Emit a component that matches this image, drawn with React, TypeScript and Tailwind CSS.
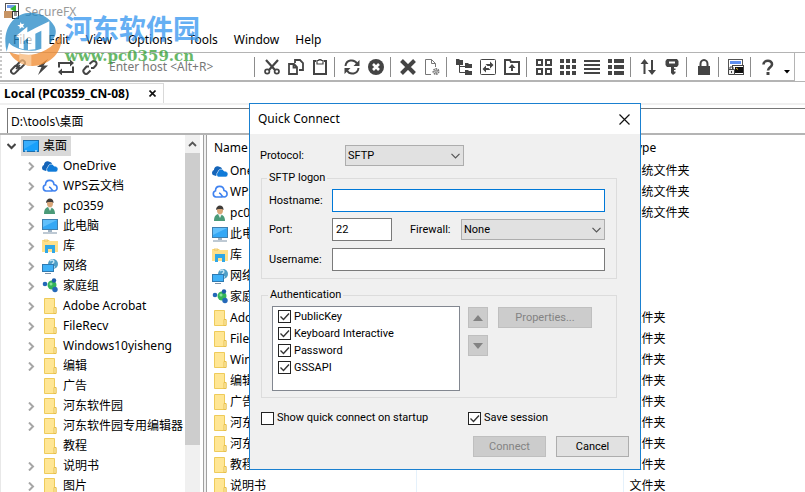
import type { ReactNode } from "react";

type Kind = "desktop" | "onedrive" | "wps" | "user" | "pc" | "library" | "network" | "homegroup" | "folder";
type Item = { name: string; kind: Kind; expandable: boolean; type: string };

const items: Item[] = [
  { name: "OneDrive", kind: "onedrive", expandable: true, type: "系统文件夹" },
  { name: "WPS云文档", kind: "wps", expandable: true, type: "系统文件夹" },
  { name: "pc0359", kind: "user", expandable: true, type: "系统文件夹" },
  { name: "此电脑", kind: "pc", expandable: true, type: "" },
  { name: "库", kind: "library", expandable: true, type: "" },
  { name: "网络", kind: "network", expandable: true, type: "" },
  { name: "家庭组", kind: "homegroup", expandable: true, type: "" },
  { name: "Adobe Acrobat", kind: "folder", expandable: true, type: "文件夹" },
  { name: "FileRecv", kind: "folder", expandable: true, type: "文件夹" },
  { name: "Windows10yisheng", kind: "folder", expandable: true, type: "文件夹" },
  { name: "编辑", kind: "folder", expandable: true, type: "文件夹" },
  { name: "广告", kind: "folder", expandable: false, type: "文件夹" },
  { name: "河东软件园", kind: "folder", expandable: true, type: "文件夹" },
  { name: "河东软件园专用编辑器", kind: "folder", expandable: true, type: "文件夹" },
  { name: "教程", kind: "folder", expandable: false, type: "文件夹" },
  { name: "说明书", kind: "folder", expandable: true, type: "文件夹" },
  { name: "图片", kind: "folder", expandable: true, type: "文件夹" },
];

// The list pane is short of room for the last folder.
const listed = items.slice(0, 16);

const menus = ["File", "Edit", "View", "Options", "Tools", "Window", "Help"];

function Monitor() {
  return (
    <>
      <rect x="0.5" y="1.5" width="15" height="10" fill="#35a8f5" stroke="#3f7fae" />
      <path d="M1 2h14L1 9z" fill="#7fd0ff" opacity=".6" />
      <path d="M6 12h4v2H6z" fill="#9fb3c4" />
      <path d="M1 15h14" stroke="#7d93a8" />
    </>
  );
}

function FileIcon({ kind }: { kind: Kind }) {
  let art: ReactNode;
  switch (kind) {
    case "desktop":
      art = (
        <>
          <rect x="0.5" y="2.5" width="15" height="11" fill="#18a0fb" stroke="#1b6fae" />
          <path d="M1 3h14L1 11z" fill="#4db8ff" opacity=".6" />
          <path d="M2 13h2M12 13h2" stroke="#fff" />
        </>
      );
      break;
    case "onedrive":
      art = (
        <>
          <path d="M1 12a3 3 0 0 1 1-5c0-3 3-5 6-3 1 0 2 1 2 2L4 13z" fill="#1464b8" />
          <path d="M6 14a3 3 0 0 1 0-5c0-3 5-4 6-1 3 0 4 2 4 3s-1 3-2 3z" fill="#0f7ad8" stroke="#fff" strokeWidth=".6" />
        </>
      );
      break;
    case "wps":
      art = (
        <path
          d="M10.500 13H4a3.200 3.200 0 0 1-.5-6.200C3.500 1 11.500 1 12 6.500c4 .5 4.200 6.500 0 6.500-3 0-2-3.500-5-4"
          fill="none"
          stroke="#3f82f0"
          strokeWidth="1.600"
        />
      );
      break;
    case "user":
      art = (
        <>
          <path d="M2 16c0-5 2-7 5-7s6 2 6 7z" fill="#4a9a78" />
          <path d="M6 9l2 4 2-4z" fill="#e9f2ee" />
          <ellipse cx="8" cy="5.500" rx="3" ry="3.700" fill="#d9a679" />
          <path d="M4 5c0-6 8-6 7.500 0L10 4H6z" fill="#3f3b38" />
        </>
      );
      break;
    case "pc":
      art = <Monitor />;
      break;
    case "library":
      art = (
        <>
          <path d="M0 2h7l1 1h8v11H0z" fill="#ffe08a" />
          <path d="M2 2h4v1H2z" fill="#fff" stroke="#e8b93c" strokeWidth=".7" />
          <path d="M3 15V7h10v8h-3v-4H6v4z" fill="#2fa7e6" />
        </>
      );
      break;
    case "network":
      art = (
        <>
          <circle cx="11" cy="6" r="5" fill="#4f9fc7" />
          <path d="M8 3c3-2 5 0 3 2s-1 4 2 4" stroke="#c3e4f2" strokeWidth="1.500" fill="none" />
          <rect x="0.500" y="6.500" width="11" height="7" fill="#3fb1f7" stroke="#2f79b0" />
          <path d="M3 15.500h6" stroke="#7d93a8" />
        </>
      );
      break;
    case "homegroup":
      art = (
        <>
          <circle cx="10" cy="7" r="4.500" fill="#35b558" />
          <circle cx="3" cy="6" r="2.300" fill="#2468b8" />
          <circle cx="12" cy="2.500" r="2.200" fill="#1e5ba8" />
          <circle cx="13" cy="11.500" r="2.700" fill="#2468b8" />
          <circle cx="9" cy="6" r="1.500" fill="#8be09b" />
        </>
      );
      break;
    default:
      art = (
        <>
          <path d="M2.500 .5h10v9h1.500v6H2.500z" fill="#ffe694" stroke="#eecb5a" />
          <path d="M12 15.500V9.500h2v6z" fill="#fff0b8" stroke="#e5b93f" strokeWidth=".8" />
        </>
      );
  }
  return (
    <svg className="size-4 shrink-0" viewBox="0 0 16 16" aria-hidden="true">
      {art}
    </svg>
  );
}

const glyphs: Record<string, ReactNode> = {
  Connect: (
    <g fill="none" stroke="currentColor" strokeWidth="2">
      <rect x="6.500" y="2.800" width="9" height="5" rx="2.500" transform="rotate(-45 11 5.300)" />
      <rect x=".5" y="8.200" width="9" height="5" rx="2.500" transform="rotate(-45 5 10.700)" />
      <path d="M6 10l4-4" strokeWidth="1.600" />
    </g>
  ),
  "Quick connect": <path d="M14 0L3 8h4.500L4 16l10-9.500H9.500z" fill="currentColor" />,
  Reconnect: (
    <g fill="none" stroke="currentColor" strokeWidth="2">
      <path d="M1 8.500V4h12M15 7.500V13H3" />
      <path d="M12 .500L16 4l-4 3.500zM4 9.500L0 13l4 3.500z" fill="currentColor" stroke="none" />
    </g>
  ),
  Disconnect: (
    <g fill="none" stroke="currentColor" strokeWidth="2">
      <path d="M7.500 5L10 2.700a2.600 2.600 0 0 1 3.800 3.800L11.500 9H9" />
      <path d="M8.500 11.500L6 14A2.600 2.600 0 0 1 2.200 10.200L4.500 7.500H7" />
    </g>
  ),
  Cut: (
    <g fill="none" stroke="currentColor">
      <path d="M2 1l9 10M14 1L5 11" strokeWidth="2.200" />
      <circle cx="3.200" cy="12.500" r="2.200" strokeWidth="1.700" />
      <circle cx="12.800" cy="12.500" r="2.200" strokeWidth="1.700" />
    </g>
  ),
  Copy: (
    <g fill="none" stroke="currentColor" strokeWidth="1.800">
      <path d="M7 4V1h5l3 3v7h-4" />
      <path d="M1 5h5l3 3v7H1zM5.500 5v3.500H9" />
    </g>
  ),
  Paste: (
    <g fill="none" stroke="currentColor">
      <path d="M4 2H2v13h12V2h-2" strokeWidth="2" />
      <path d="M5 1.500h2V.500h2v1h2V5H5z" strokeWidth="1.200" />
    </g>
  ),
  Refresh: (
    <g fill="none" stroke="currentColor" strokeWidth="2">
      <path d="M1.500 7A6.200 6.200 0 0 1 13 4.500M14.500 9A6.200 6.200 0 0 1 3 11.500" />
      <path d="M15.500 1v6H9.500zM.5 15V9h6z" fill="currentColor" stroke="none" />
    </g>
  ),
  Stop: (
    <>
      <circle cx="8" cy="8" r="8" fill="currentColor" />
      <path d="M5 5l6 6M11 5l-6 6" stroke="#fff" strokeWidth="2.600" />
    </>
  ),
  Delete: <path d="M1.500 1.500l13 13M14.500 1.500l-13 13" stroke="currentColor" strokeWidth="4" />,
  "Properties of file": (
    <g fill="none" stroke="#777">
      <path d="M7 15.500H1.500V.500h6l4 4V8M7.500.500v4h4" />
      <circle cx="12" cy="12.500" r="2.500" strokeWidth="2" strokeDasharray="1.500 .7" />
      <circle cx="12" cy="12.500" r="1" />
    </g>
  ),
  Tree: (
    <>
      <path d="M0 0h3l1 1h3v5H0zM9 4h3l1 1h3v4H9zM9 11h3l1 1h3v4H9z" fill="currentColor" />
      <path d="M3.500 5v8.500H9M3.500 7.500H9" fill="none" stroke="currentColor" />
    </>
  ),
  Synchronize: (
    <>
      <rect x=".5" y=".5" width="15" height="15" rx="1" fill="none" stroke="currentColor" />
      <path d="M5.500 5H10V2.500l3.500 3.500L10 9.500V7H7.500zM10.500 11H6v2.500L2.500 10 6 6.500V9h2.500z" fill="currentColor" />
    </>
  ),
  "Up one level": (
    <>
      <path d="M1 15V1h5l1 2h8v12z" fill="none" stroke="currentColor" strokeWidth="2" />
      <path d="M8 5l3.500 4H9v3H7V9H4.500z" fill="currentColor" />
    </>
  ),
  "Large icons": (
    <path d="M1 1h5v5H1zM10 1h5v5h-5zM1 10h5v5H1zM10 10h5v5h-5z" fill="none" stroke="currentColor" strokeWidth="2" />
  ),
  "Small icons": (
    <path
      d="M0 0h4v4H0zM6 0h4v4H6zM12 0h4v4h-4zM0 6h4v4H0zM6 6h4v4H6zM12 6h4v4h-4zM0 12h4v4H0zM6 12h4v4H6zM12 12h4v4h-4z"
      fill="currentColor"
    />
  ),
  List: <path d="M0 2h16M0 6h16M0 10h16M0 14h16" stroke="currentColor" strokeWidth="2" />,
  Details: (
    <path d="M0 0h4v4H0zM6 0h10v4H6zM0 6h4v4H0zM6 6h10v4H6zM0 12h4v4H0zM6 12h10v4H6z" fill="currentColor" />
  ),
  Transfer: (
    <g stroke="currentColor" strokeWidth="2" fill="currentColor">
      <path d="M4.500 4v11M12 1v10" />
      <path d="M4.500 0L8.500 5h-8zM12 16l4-5H8z" stroke="none" />
    </g>
  ),
  Key: (
    <path
      d="M3 0h10l1.500 2v4L13 8h-3v1.500h1.500V11H10v1.500h1.500V14L9 16l-2-2V8H3L1.500 6V2zM5 2.500v2h6v-2z"
      fillRule="evenodd"
      fill="currentColor"
    />
  ),
  Lock: (
    <>
      <path d="M2 7h12v9H2z" fill="currentColor" />
      <path d="M4.500 8V5a3.500 4 0 0 1 7 0v3" fill="none" stroke="currentColor" strokeWidth="2" />
    </>
  ),
  "Launch session": (
    <>
      <rect x=".5" y=".5" width="14" height="10" fill="#fff" stroke="#555" />
      <path d="M2 2h11v3H2z" fill="#6090f0" />
      <rect x="4.500" y="6.500" width="11" height="9" fill="#fff" stroke="#444" />
      <path d="M7 8h8v6H7z" fill="#111" />
      <path d="M8 9l2 1.500" stroke="#e8c030" />
      <path d="M.5 10.500h6v5h-6z" fill="#eee" stroke="#444" />
      <path d="M2 10V8h3v2M3.500 12v2" fill="none" stroke="#444" />
    </>
  ),
  Help: (
    <>
      <path d="M3.500 5.500C3.500.500 12.500.500 12 5.500c0 2.500-4 3-4 6" fill="none" stroke="currentColor" strokeWidth="2.600" />
      <path d="M6.500 13h3v3h-3z" fill="currentColor" />
    </>
  ),
};

function Tools({ names }: { names: string[] }) {
  return (
    <div className="flex shrink-0">
      {names.map((n) => (
        <button key={n} type="button" aria-label={n} className="flex h-6 w-6 items-center justify-center">
          <svg className="size-4" viewBox="0 0 16 16">
            {glyphs[n]}
          </svg>
        </button>
      ))}
    </div>
  );
}

function Rule() {
  return (
    <div className="w-2 shrink-0 pl-0.5">
      <div className="h-5 w-px bg-[#8c8c8c]" />
    </div>
  );
}

function Toolbar() {
  const groups = [
    ["Cut", "Copy", "Paste"],
    ["Refresh", "Stop"],
    ["Delete", "Properties of file"],
    ["Tree", "Synchronize", "Up one level"],
    ["Large icons", "Small icons", "List", "Details"],
    ["Transfer", "Key"],
    ["Lock"],
    ["Launch session"],
  ];
  return (
    <div className="flex h-[29px] shrink-0 border-b border-[#b4b4b4]">
      <div className="flex items-center border-r border-b border-[#b4b4b4] pt-px pr-1 text-[#444]">
        <div className="h-[22px] w-1.5 shrink-0">
          <div className="h-full border-l-2 border-dotted border-[#c8c8c8]" />
        </div>
        <Tools names={["Connect", "Quick connect", "Reconnect", "Disconnect"]} />
        <input
          aria-label="Enter host"
          placeholder="Enter host <Alt+R>"
          className="w-[150px] min-w-0 pl-[7px] text-xs text-[#444] outline-none placeholder:text-[#777]"
        />
        <Rule />
        {groups.map((g) => (
          <div key={g[0]} className="flex items-center">
            <Tools names={g} />
            <Rule />
          </div>
        ))}
        <Tools names={["Help"]} />
        <svg className="mt-2.5 ml-1 h-1 w-1.5" viewBox="0 0 6 4">
          <path d="M0 0h6L3 3.500z" fill="#000" />
        </svg>
      </div>
    </div>
  );
}

function Watermark() {
  return (
    <div className="pointer-events-none absolute top-2.5 left-1 flex gap-[3px] opacity-75">
      <svg className="size-[58px]" viewBox="12 30 174 174">
        <path
          d="M20 155C4 92 38 38 92 38c33 0 58 17 71 40 6 12 5 22 2 30-12 26-40 44-70 44-30 0-56-10-68-24z"
          fill="#2287c6"
        />
        <path d="M61 66l4 6 8-1-4 6 4 7-8-2-6 5v-7l-7-4 8-2z" fill="#fff" />
        <path d="M48 108l34-28v17l24-13 42-20v86l-24-4V92l-18 9v47l-22 2v-36l-13 10v24l-14-4v-31z" fill="#fff" />
        <path d="M183 103c10 56-40 97-88 95-31-2-57-19-67-42 60 23 124 4 155-53z" fill="#f0882a" />
        <path d="M58 160c12 4 24 5 36 4v34c-14-1-26-5-36-11z" fill="#f7b676" />
      </svg>
      <div className="flex flex-col pt-1 leading-none">
        <span className="font-['Noto_Sans_CJK_SC',sans-serif] text-[27px] leading-7 font-bold text-[#3295f0]">河东软件园</span>
        <span className="pt-0.5 font-['DejaVu_Serif',serif] text-[15px] leading-6 font-bold text-[#35a035]">www.pc0359.cn</span>
      </div>
    </div>
  );
}

function Tree() {
  return (
    <aside className="flex w-[203px] shrink-0 overflow-hidden border-l border-[#e8e8e8]">
      <div className="min-w-0 flex-1 overflow-hidden pt-px">
        <div className="flex h-5 items-center pl-1.5">
          <svg className="h-2 w-[9px] shrink-0" viewBox="0 0 9 8">
            <path d="M.5 2l4 4 4-4" fill="none" stroke="#444" strokeWidth="2" />
          </svg>
          <button type="button" className="ml-[5px] flex h-5 items-center gap-1 bg-[#d9d9d9] pr-1 pl-0.5">
            <FileIcon kind="desktop" />
            桌面
          </button>
        </div>
        <ul>
          {items.map((it) => (
            <li key={it.name} className="flex h-5 items-center pl-[26px]">
              <svg className="h-[9px] w-2 shrink-0" viewBox="0 0 8 9">
                {it.expandable && <path d="M2 .5l4 4-4 4" fill="none" stroke="#a6a6a6" strokeWidth="2" />}
              </svg>
              <button type="button" className="ml-[7px] flex items-center gap-[5px] whitespace-nowrap">
                <FileIcon kind={it.kind} />
                {it.name}
              </button>
            </li>
          ))}
        </ul>
      </div>
      <div className="mr-[3px] flex w-[15px] shrink-0 flex-col bg-[#f0f0f0]">
        <div className="flex h-[18px] items-center justify-center">
          <svg className="h-2 w-[9px]" viewBox="0 0 9 8">
            <path d="M1 6l3.500-3.500L8 6" fill="none" stroke="#555" strokeWidth="1.800" />
          </svg>
        </div>
        <div className="h-[292px] bg-[#cdcdcd]" />
      </div>
    </aside>
  );
}

function FileList() {
  return (
    <div className="min-w-0 flex-1 overflow-hidden">
      <table className="w-full table-fixed border-collapse text-left">
        <colgroup>
          <col className="w-[209px]" />
          <col className="w-[207px]" />
          <col />
        </colgroup>
        <thead>
          <tr className="h-[25px]">
            <th className="border-r border-[#e5f1fb] pl-[7px] font-normal">Name</th>
            <th className="border-r border-[#e5f1fb] font-normal" aria-label="Size" />
            <th className="pl-1.5 font-normal">Type</th>
          </tr>
        </thead>
        <tbody>
          {listed.map((it) => (
            <tr key={it.name} className="h-[21px]">
              <td className="border-r border-[#e5f1fb] pl-[5px]">
                <span className="flex items-center gap-0.5 whitespace-nowrap">
                  <FileIcon kind={it.kind} />
                  {it.name}
                </span>
              </td>
              <td className="border-r border-[#e5f1fb]" />
              <td className="pl-1.5">{it.type}</td>
            </tr>
          ))}
        </tbody>
      </table>
    </div>
  );
}

function Check({ label, checked }: { label: string; checked?: boolean }) {
  return (
    <label className="flex items-center gap-[3px] whitespace-nowrap">
      <span className="relative size-[13px]">
        <input
          type="checkbox"
          defaultChecked={checked}
          className="peer block size-[13px] appearance-none border border-[#222] bg-white"
        />
        <svg
          className="pointer-events-none absolute inset-0 hidden size-[13px] peer-checked:block"
          viewBox="0 0 13 13"
        >
          <path d="M2.500 6.500l3 3 5.500-6" fill="none" stroke="#333" strokeWidth="1.400" />
        </svg>
      </span>
      {label}
    </label>
  );
}

function Dropdown({ id, value, width }: { id: string; value: string; width: string }) {
  return (
    <div className={`relative h-[21px] ${width}`}>
      <select
        id={id}
        defaultValue={value}
        className="block h-full w-full appearance-none border border-[#adadad] bg-[#e1e1e1] pt-px pl-0.5 leading-4 outline-none"
      >
        <option>{value}</option>
      </select>
      <svg className="pointer-events-none absolute top-2 right-1 h-1.5 w-[9px]" viewBox="0 0 9 6">
        <path d="M.5.800l4 4 4-4" fill="none" stroke="#555" strokeWidth="1.200" />
      </svg>
    </div>
  );
}

const disabledButton =
  "flex h-[21px] items-center justify-center border border-[#bfbfbf] bg-[#cccccc] text-[#838383]";

function QuickConnect() {
  return (
    <section
      role="dialog"
      aria-labelledby="dialog-title"
      className="absolute top-[103px] left-[249px] flex w-[392px] flex-col border border-[#1a80d0] bg-[#f0f0f0] pb-3 font-['Roboto','Noto_Sans_CJK_SC',sans-serif] text-[11px] leading-4"
    >
      <header className="flex h-[30px] items-center justify-between bg-white pr-2.5 pl-2">
        <h1 id="dialog-title" className="font-['Noto_Sans',sans-serif] text-xs">
          Quick Connect
        </h1>
        <button type="button" aria-label="Close">
          <svg className="size-[11px]" viewBox="0 0 11 11">
            <path d="M.5.500l10 10M10.500.500l-10 10" stroke="#111" strokeWidth="1.200" />
          </svg>
        </button>
      </header>
      <div className="flex items-center pt-[11px] pl-2.5">
        <label htmlFor="protocol" className="w-[85px]">
          Protocol:
        </label>
        <Dropdown id="protocol" value="SFTP" width="w-[119px]" />
      </div>
      <fieldset className="mt-1 mr-[23px] ml-[11px] flex flex-col border border-[#dcdcdc] pr-[11px] pb-[7px] pl-[7px]">
        <legend className="-ml-0.5 px-0.5">SFTP logon</legend>
        <div className="mt-[3px] flex items-center">
          <label htmlFor="host" className="w-[63px]">
            Hostname:
          </label>
          <input id="host" className="h-[23px] min-w-0 flex-1 border border-[#0078d7] bg-white px-1 outline-none" />
        </div>
        <div className="mt-1.5 flex items-center">
          <label htmlFor="port" className="w-[63px]">
            Port:
          </label>
          <input
            id="port"
            defaultValue="22"
            className="h-[23px] w-[60px] border border-[#7a7a7a] bg-white px-[3px] outline-none"
          />
          <label htmlFor="firewall" className="ml-[18px] w-[51px]">
            Firewall:
          </label>
          <Dropdown id="firewall" value="None" width="flex-1" />
        </div>
        <div className="mt-[7px] flex items-center">
          <label htmlFor="user" className="w-[63px]">
            Username:
          </label>
          <input id="user" className="h-[23px] min-w-0 flex-1 border border-[#7a7a7a] bg-white px-1 outline-none" />
        </div>
      </fieldset>
      <fieldset className="mt-2 mr-[23px] ml-[11px] flex border border-[#dcdcdc] px-2.5 pb-1.5">
        <legend className="-ml-1 px-0.5">Authentication</legend>
        <div className="mt-[3px] flex gap-2">
          <div className="flex h-[85px] w-[188px] flex-col border border-[#828790] bg-white pt-px pl-[5px]">
            {["PublicKey", "Keyboard Interactive", "Password", "GSSAPI"].map((m) => (
              <div key={m} className="flex h-[17px] items-center">
                <Check label={m} checked />
              </div>
            ))}
          </div>
          <div className="mt-px flex flex-col gap-[7px]">
            <button type="button" disabled aria-label="Move up" className={`${disabledButton} w-5`}>
              <svg className="h-1.5 w-2.5" viewBox="0 0 10 6">
                <path d="M0 6l5-6 5 6z" fill="#838383" />
              </svg>
            </button>
            <button type="button" disabled aria-label="Move down" className={`${disabledButton} w-5`}>
              <svg className="h-1.5 w-2.5" viewBox="0 0 10 6">
                <path d="M0 0l5 6 5-6z" fill="#838383" />
              </svg>
            </button>
          </div>
          <button type="button" disabled className={`${disabledButton} mt-px ml-0.5 w-[94px]`}>
            Properties...
          </button>
        </div>
      </fieldset>
      <div className="mt-3 flex px-[11px]">
        <div className="w-[207px]">
          <Check label="Show quick connect on startup" />
        </div>
        <Check label="Save session" checked />
      </div>
      <div className="mt-2.5 flex justify-end gap-2.5 pr-[11px]">
        <button type="button" disabled className={`${disabledButton} w-[73px]`}>
          Connect
        </button>
        <button type="button" className="h-[21px] w-[73px] border border-[#adadad] bg-[#e1e1e1]">
          Cancel
        </button>
      </div>
    </section>
  );
}

export default function App() {
  return (
    <div className="relative flex h-screen flex-col overflow-hidden bg-white font-['Noto_Sans','Noto_Sans_CJK_SC',sans-serif] text-xs leading-4 text-black">
      <header className="flex h-7 shrink-0 items-center gap-[5px] pl-1 text-[#999]">
        <svg className="mb-1.5 size-4" viewBox="0 0 16 16">
          <rect x="1.500" y=".5" width="13" height="9" fill="#fff" stroke="#555" />
          <path d="M3 2h8v3H3z" fill="#6f9be8" />
          <path d="M6 6l6-4v7z" fill="#2fb52f" />
          <path d="M0 8h8v7H0z" fill="#c79464" />
          <rect x="8.500" y="8.500" width="6" height="7" fill="#fff" stroke="#333" />
          <path d="M10 10h3M10 12h3" stroke="#333" />
        </svg>
        <span className="mb-1">SecureFX</span>
      </header>
      <nav className="flex h-[25px] shrink-0 items-center border-b border-[#b4b4b4]">
        <div className="h-[21px] w-[13px] shrink-0 border-l-2 border-dotted border-[#c8c8c8]" />
        <div className="flex gap-4">
          {menus.map((m) => (
            <button key={m} type="button">
              {m}
            </button>
          ))}
        </div>
      </nav>
      <Toolbar />
      <div className="flex h-[23px] shrink-0 border-b-2 border-[#f0f0f0] pt-px">
        <div className="flex items-center gap-5 border-t border-r border-[#d9d9d9] pr-[7px] pl-1">
          <span className="font-bold">Local (PC0359_CN-08)</span>
          <button type="button" aria-label="Close tab">
            <svg className="size-[7px]" viewBox="0 0 7 7">
              <path d="M.5.500l6 6M6.500.500l-6 6" stroke="#111" strokeWidth="1.600" />
            </svg>
          </button>
        </div>
      </div>
      <div className="mt-[3px] flex h-[27px] shrink-0 border-b-2 border-[#b4b4b4] pl-[7px]">
        <input
          aria-label="Path"
          defaultValue="D:\tools\桌面"
          className="h-[25px] min-w-0 flex-1 border border-r-0 border-b-0 border-[#777] pl-[3px] outline-none"
        />
      </div>
      <main className="flex min-h-0 flex-1">
        <Tree />
        <div className="w-1 shrink-0 border-x border-x-[#a0a0a0] bg-[#f0f0f0]" />
        <FileList />
      </main>
      <Watermark />
      <QuickConnect />
    </div>
  );
}
